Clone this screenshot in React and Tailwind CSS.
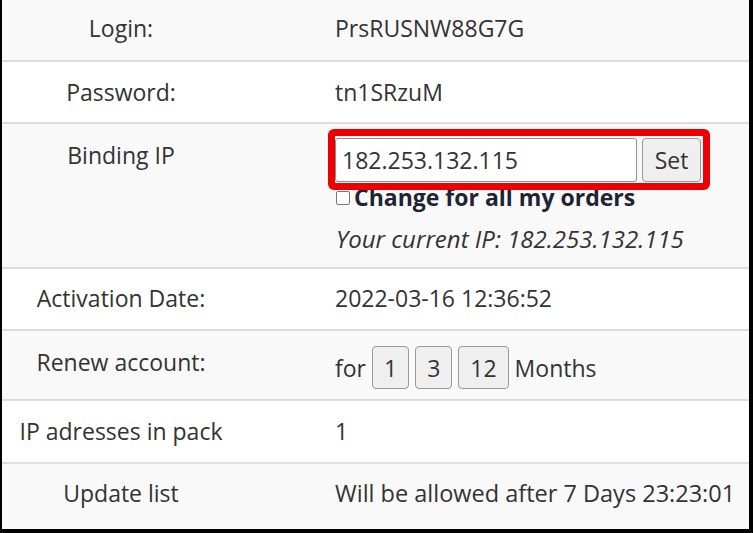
export default function App() {
  const font = { fontFamily: '"Open Sans", "Noto Sans", sans-serif' };
  const label = "w-[238px] shrink-0 text-center";
  const val = "pl-[95px] whitespace-nowrap";
  return (
    <div
      className="w-[753px] h-[533px] border-l-2 border-r-4 border-b-4 border-black bg-white text-[23px] leading-[28px] text-[#333] overflow-hidden"
      style={font}
    >
      <div className="flex h-[62px] pt-[14px] bg-[#f9f9f9] border-b-2 border-[#ddd]">
        <div className={label}>Login:</div>
        <div className={val}>PrsRUSNW88G7G</div>
      </div>
      <div className="flex h-[62px] pt-[16px] bg-white border-b-2 border-[#ddd]">
        <div className={label}>Password:</div>
        <div className={val}>tn1SRzuM</div>
      </div>
      <div className="flex h-[145px] bg-[#f9f9f9] border-b-2 border-[#ddd]">
        <div className={label + " pt-[17px]"}>Binding IP</div>
        <div className={val + " pt-[14px] pl-[94px]"}>
          <div className="relative inline-flex gap-[5px]">
            <div className="absolute -left-[7px] -top-[9px] -right-[9px] -bottom-[8px] border-[7px] border-[#ee0000] rounded-[6px] pointer-events-none" />
            <div className="w-[302px] h-[44px] bg-white border border-[#8f8f8f] rounded-[3px] px-[6px] flex items-center">
              182.253.132.115
            </div>
            <div className="w-[59px] h-[44px] bg-[#efefef] border border-[#9a9a9a] rounded-[4px] flex items-center justify-center">
              Set
            </div>
          </div>
          <div className="flex items-center mt-[1px] pl-[1px] h-[28px]">
            <span className="w-[14px] h-[14px] border border-[#767676] rounded-[2px] bg-white mr-[4px] mt-[2px]" />
            <span className="font-bold text-[#1e2433]">Change for all my orders</span>
          </div>
          <div className="italic mt-[14px] pl-[1px] text-[24px]">Your current IP: 182.253.132.115</div>
        </div>
      </div>
      <div className="flex h-[62px] pt-[15px] bg-white border-b-2 border-[#ddd]">
        <div className={label}>Activation Date:</div>
        <div className={val}>2022-03-16 12:36:52</div>
      </div>
      <div className="flex h-[70px] bg-[#f9f9f9] border-b-2 border-[#ddd]">
        <div className={label + " pt-[17px]"}>Renew account:</div>
        <div className={val + " pt-[15px] flex items-center h-[58px] gap-[6px]"}>
          <span>for</span>
          <span className="h-[43px] px-[11px] bg-[#efefef] border border-[#9a9a9a] rounded-[4px] flex items-center">1</span>
          <span className="h-[43px] px-[11px] bg-[#efefef] border border-[#9a9a9a] rounded-[4px] flex items-center">3</span>
          <span className="h-[43px] px-[11px] bg-[#efefef] border border-[#9a9a9a] rounded-[4px] flex items-center">12</span>
          <span>Months</span>
        </div>
      </div>
      <div className="flex h-[63px] pt-[16px] bg-white border-b-2 border-[#ddd]">
        <div className={label}>IP adresses in pack</div>
        <div className={val}>1</div>
      </div>
      <div className="flex h-[65px] pt-[15px] bg-[#f9f9f9]">
        <div className={label}>Update list</div>
        <div className={val + " text-[23.5px]"}>Will be allowed after 7 Days 23:23:01</div>
      </div>
    </div>
  );
}
